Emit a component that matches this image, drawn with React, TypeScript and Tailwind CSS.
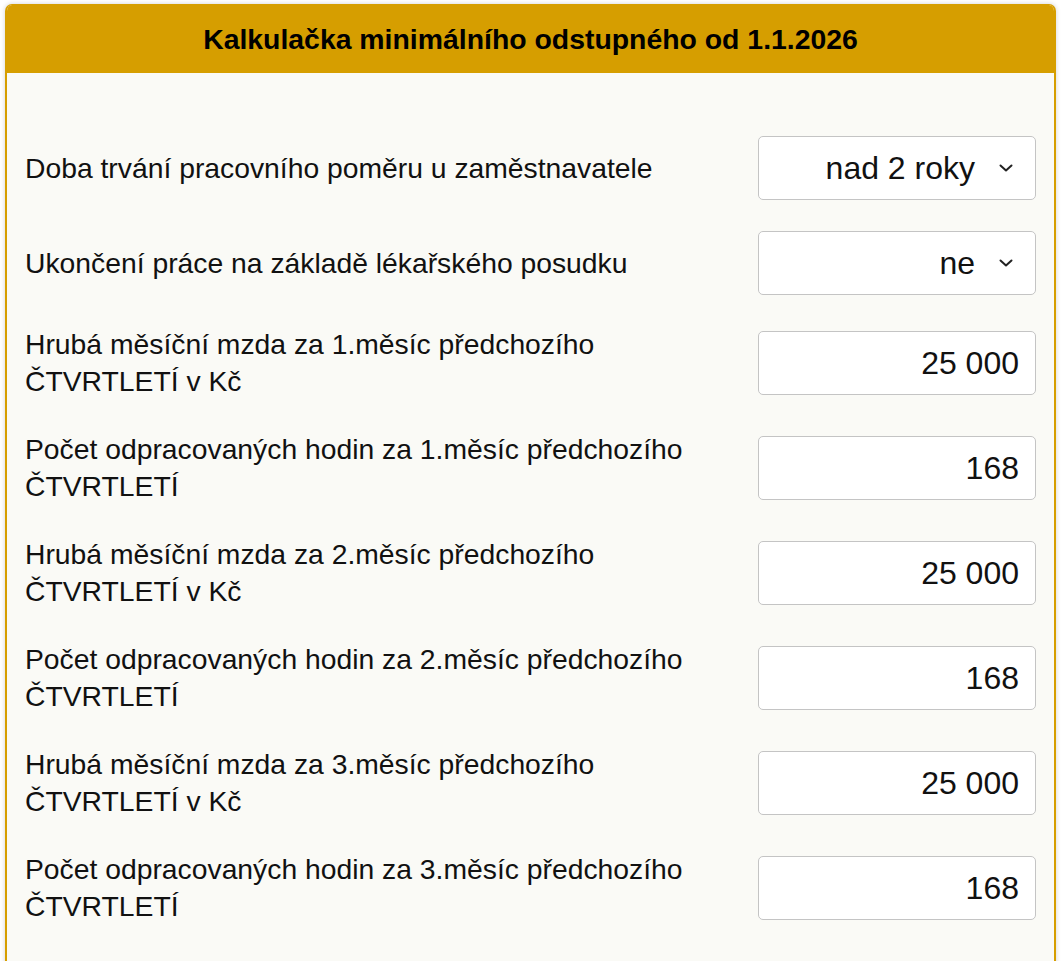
import { useState } from "react";

const rows = [
  { label: "Hrubá měsíční mzda za 1.měsíc předchozího ČTVRTLETÍ v Kč", value: "25 000" },
  { label: "Počet odpracovaných hodin za 1.měsíc předchozího ČTVRTLETÍ", value: "168" },
  { label: "Hrubá měsíční mzda za 2.měsíc předchozího ČTVRTLETÍ v Kč", value: "25 000" },
  { label: "Počet odpracovaných hodin za 2.měsíc předchozího ČTVRTLETÍ", value: "168" },
  { label: "Hrubá měsíční mzda za 3.měsíc předchozího ČTVRTLETÍ v Kč", value: "25 000" },
  { label: "Počet odpracovaných hodin za 3.měsíc předchozího ČTVRTLETÍ", value: "168" },
];

const Chevron = () => (
  <svg width="14" height="8" viewBox="0 0 14 8" fill="none" className="shrink-0">
    <path d="M1.5 1.5 L7 6.5 L12.5 1.5" stroke="#222" strokeWidth="2" strokeLinecap="round" strokeLinejoin="round" />
  </svg>
);

const Select = ({ value }: { value: string }) => (
  <div className="w-[278px] h-16 shrink-0 bg-white border border-[#c4c4c4] rounded-[5px] flex items-center justify-end pr-[22px] gap-[24px]">
    <span className="text-[32px] text-[#111]">{value}</span>
    <Chevron />
  </div>
);

export default function App() {
  const [vals, setVals] = useState(rows.map((r) => r.value));

  return (
    <div className="min-h-screen bg-white p-[5px] pt-[4px] font-['Liberation_Sans',Arial,sans-serif]">
      <div className="rounded-t-[7px] border-x-2 border-t border-[#d69e00] bg-[#fafaf6] shadow-[0_0_5px_rgba(0,0,0,0.18)] overflow-hidden">
        <div className="h-[68px] bg-[#d69e00] flex items-center justify-center">
          <h1 className="text-[28.4px] font-bold text-black">Kalkulačka minimálního odstupného od 1.1.2026</h1>
        </div>
        <div className="pt-[63px] pb-[40px] px-[18px] flex flex-col gap-[31px] text-[28.3px] leading-[37px] text-[#111]">
          <div className="flex items-center justify-between">
            <span>Doba trvání pracovního poměru u zaměstnavatele</span>
            <Select value="nad 2 roky" />
          </div>
          <div className="flex items-center justify-between">
            <span>Ukončení práce na základě lékařského posudku</span>
            <Select value="ne" />
          </div>
          {rows.map((r, i) => (
            <div key={i} className="flex items-center justify-between">
              <span className="w-[700px]">{r.label}</span>
              <input
                value={vals[i]}
                onChange={(e) => setVals(vals.map((v, j) => (j === i ? e.target.value : v)))}
                className="w-[278px] h-16 shrink-0 bg-white border border-[#c4c4c4] rounded-[5px] text-right pr-4 text-[32px] text-[#111] outline-none"
              />
            </div>
          ))}
        </div>
      </div>
    </div>
  );
}
